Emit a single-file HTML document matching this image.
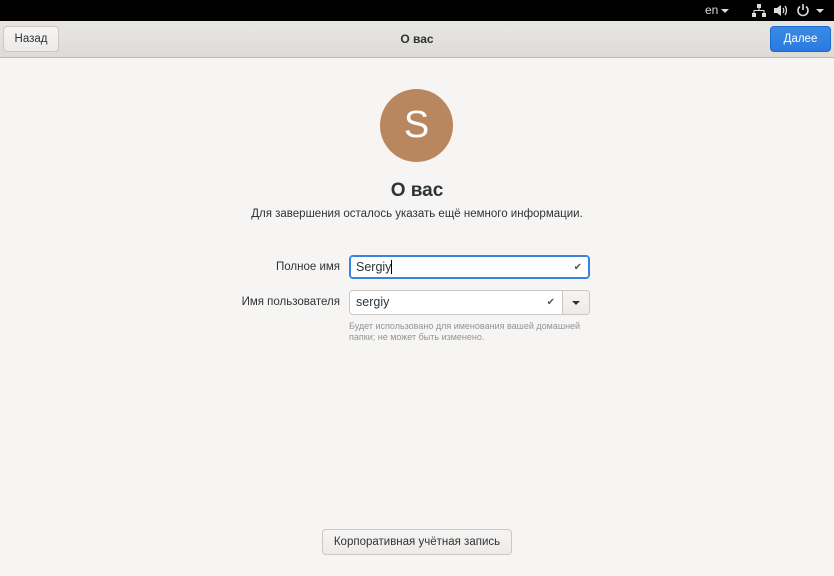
<!DOCTYPE html>
<html><head><meta charset="utf-8"><style>
*{box-sizing:border-box;margin:0;padding:0}
body{width:834px;height:576px;background:#f6f5f4;font-family:"Liberation Sans","DejaVu Sans",sans-serif;color:#2e3436;position:relative;overflow:hidden;font-size:11px}
.top{position:absolute;left:0;top:0;width:834px;height:21px;background:#000;color:#eee}
.hdr{position:absolute;left:0;top:21px;width:834px;height:37px;background:linear-gradient(#e8e6e3,#dedbd7);border-bottom:1px solid #bfb8b1}
.btn{position:absolute;border:1px solid #cdc7c2;border-radius:4px;background:linear-gradient(#f6f5f4,#edebe9);font-size:11.5px;color:#2e3436;text-align:center}
.abs{position:absolute}
.field{position:absolute;height:24px;background:#fff;border:1px solid #cdc7c2;border-radius:4px;font-size:12.5px;padding:4px 6px;color:#2e3436}
.chk{position:absolute;right:7px;top:6px;font-size:10px;color:#555;font-family:"DejaVu Sans",sans-serif}
</style></head><body>
<div class="top">
 <div class="abs" style="left:705px;top:3px;font-size:12px;color:#ddd">en</div>
 <div class="abs" style="left:721px;top:9px;width:0;height:0;border-left:4px solid transparent;border-right:4px solid transparent;border-top:4px solid #ddd"></div>
 <svg class="abs" style="left:752px;top:4px" width="14" height="13" viewBox="0 0 14 13"><rect x="5" y="0" width="4" height="4" fill="#ddd"/><rect x="6.5" y="4" width="1" height="3" fill="#ddd"/><rect x="1.5" y="6" width="11" height="1" fill="#ddd"/><rect x="1.5" y="6" width="1" height="3" fill="#ddd"/><rect x="11.5" y="6" width="1" height="3" fill="#ddd"/><rect x="0" y="9" width="4" height="4" fill="#ddd"/><rect x="10" y="9" width="4" height="4" fill="#ddd"/></svg>
 <svg class="abs" style="left:773px;top:4px" width="14" height="13" viewBox="0 0 14 13"><path d="M1 4h3l4-3v11l-4-3H1z" fill="#ddd"/><path d="M10 4q1.5 2.5 0 5M12 2q3 4.5 0 9" stroke="#ddd" stroke-width="1.3" fill="none"/></svg>
 <svg class="abs" style="left:796px;top:3px" width="14" height="14" viewBox="0 0 14 14"><path d="M4 3.5A5 5 0 1 0 10 3.5" stroke="#ddd" stroke-width="1.6" fill="none"/><path d="M7 1v6" stroke="#ddd" stroke-width="1.6"/></svg>
 <div class="abs" style="left:816px;top:9px;width:0;height:0;border-left:4px solid transparent;border-right:4px solid transparent;border-top:4px solid #ddd"></div>
</div>
<div class="hdr">
 <div class="btn" style="left:3px;top:5px;width:56px;height:26px;line-height:24px">Назад</div>
 <div class="abs" style="left:0;width:834px;top:11px;text-align:center;font-weight:bold;font-size:12px">О вас</div>
 <div class="btn" style="left:770px;top:5px;width:61px;height:26px;line-height:24px;background:linear-gradient(#3a8ae4,#2b7ae0);border-color:#1b6acb;color:#fff">Далее</div>
</div>
<div class="abs" style="left:380px;top:89px;width:73px;height:73px;border-radius:50%;background:#b8875f;color:#fff;font-size:38px;text-align:center;line-height:73px">S</div>
<div class="abs" style="left:0;width:834px;top:180px;text-align:center;font-weight:bold;font-size:19px">О вас</div>
<div class="abs" style="left:0;width:834px;top:208px;text-align:center;font-size:11.5px">Для завершения осталось указать ещё немного информации.</div>
<div class="abs" style="right:494px;top:261px;font-size:11.5px">Полное имя</div>
<div class="field" style="left:349px;top:255px;width:241px;border:1px solid #3584e4;box-shadow:inset 0 0 0 1px #3584e4">Sergiy<span style="border-left:1px solid #000"></span><span class="chk">✔</span></div>
<div class="abs" style="right:494px;top:296px;font-size:11.5px">Имя пользователя</div>
<div class="field" style="left:349px;top:290px;width:241px;height:25px">sergiy<span class="chk" style="right:34px">✔</span><div style="position:absolute;right:0;top:0;width:27px;height:23px;border-left:1px solid #cdc7c2;background:linear-gradient(#f6f5f4,#edebe9);border-radius:0 4px 4px 0"><div style="position:absolute;left:9px;top:10px;border-left:4px solid transparent;border-right:4px solid transparent;border-top:4px solid #2e3436"></div></div></div>
<div class="abs" style="left:349px;top:321px;font-size:9px;color:#929595;line-height:11px;width:240px">Будет использовано для именования вашей домашней папки; не может быть изменено.</div>
<div class="btn" style="left:322px;top:529px;width:190px;height:26px;line-height:24px">Корпоративная учётная запись</div>
</body></html>
